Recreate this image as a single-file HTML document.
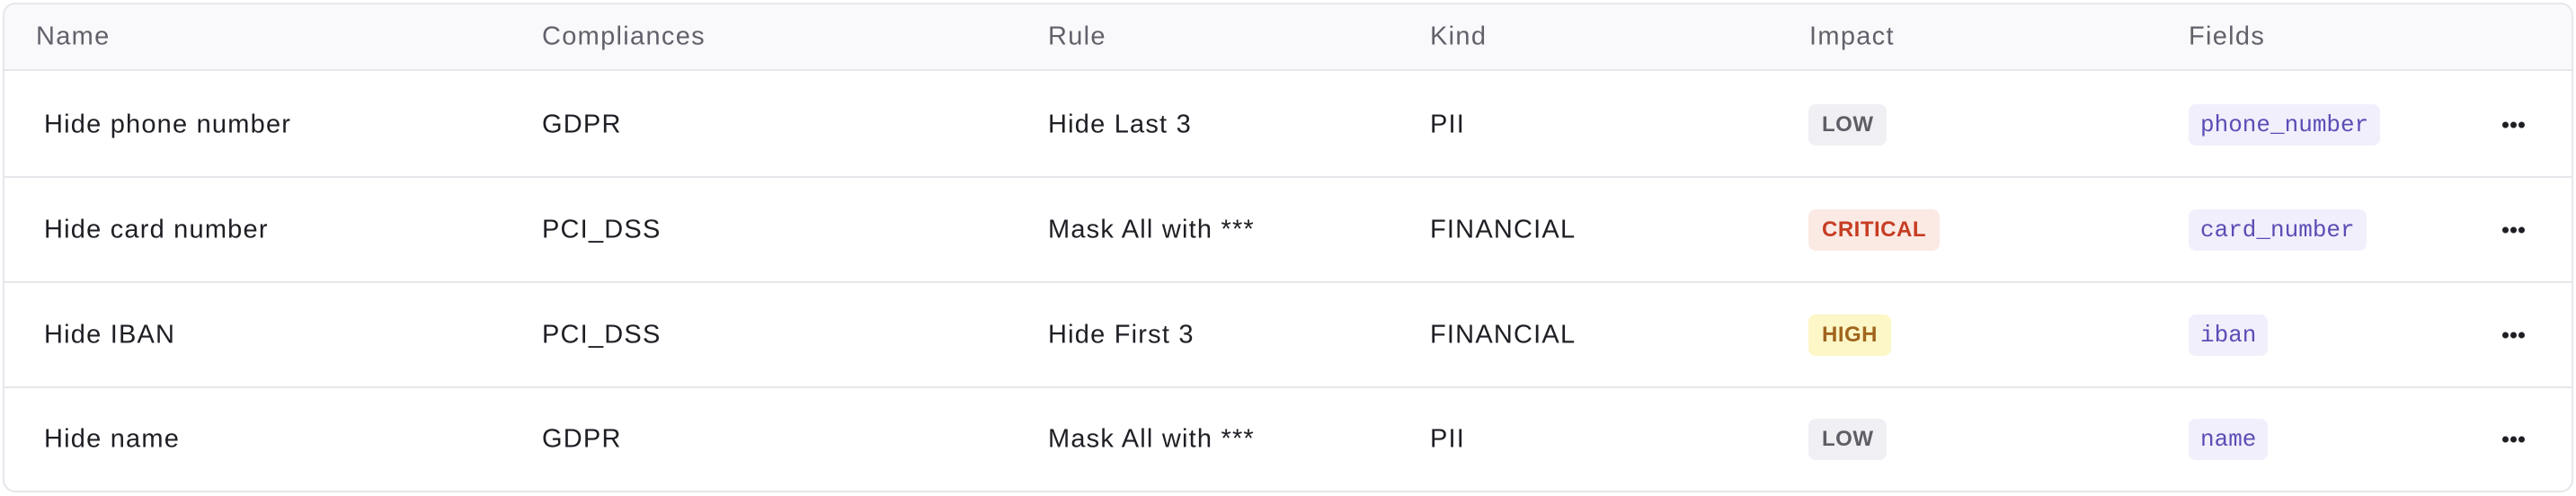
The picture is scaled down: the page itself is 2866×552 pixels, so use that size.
<!DOCTYPE html>
<html><head><meta charset="utf-8"><style>
*{box-sizing:border-box;margin:0;padding:0}
body{width:2866px;height:552px;background:#fff;position:relative;overflow:hidden;font-family:"Liberation Sans",sans-serif}
.tbl{position:absolute;left:3px;top:3px;width:2860px;height:545px;border:2px solid #e6e6eb;border-radius:14px;overflow:hidden}
.hdr{position:absolute;left:0;top:0;right:0;height:74px;background:#f9f9fb;border-bottom:2px solid #e6e6eb}
.row{position:absolute;left:0;right:0;height:117px;border-bottom:2px solid #e6e6eb}
.row.last{border-bottom:none}
.c{position:absolute;top:50%;transform:translateY(-50%);font-size:29px;letter-spacing:1.2px;color:#1e1e24;white-space:nowrap}
.hdr .c{color:#62616b;letter-spacing:1.3px}
.b{position:absolute;top:50%;transform:translateY(-50%);height:46px;line-height:46px;border-radius:8px;font-weight:bold;font-size:24px;padding:0 15px;letter-spacing:0.5px}
.low{background:#f0eff4;color:#5f5e66}
.crit{background:#fbe9e4;color:#c63d22}
.high{background:#fdf6c6;color:#a0651c}
.f{position:absolute;top:50%;transform:translateY(-50%);height:46px;line-height:46px;border-radius:8px;background:#f1effc;color:#5b4db5;font-family:"Liberation Mono",monospace;font-size:26px;padding:0 13px;left:2430px}
.dots{position:absolute;top:50%;transform:translateY(-50%);left:2779px;width:26px;height:7px}
.dots i{position:absolute;top:0;width:7px;height:7px;border-radius:50%;background:#1e1e24}
</style></head><body>
<div class="tbl">
 <div class="hdr">
  <div class="c" style="left:35px">Name</div>
  <div class="c" style="left:598px">Compliances</div>
  <div class="c" style="left:1161px">Rule</div>
  <div class="c" style="left:1586px">Kind</div>
  <div class="c" style="left:2008px">Impact</div>
  <div class="c" style="left:2430px">Fields</div>
 </div>
 <div class="row" style="top:76px">
  <div class="c" style="left:44px">Hide phone number</div>
  <div class="c" style="left:598px">GDPR</div>
  <div class="c" style="left:1161px">Hide Last 3</div>
  <div class="c" style="left:1586px">PII</div>
  <div class="b low" style="left:2007px">LOW</div>
  <div class="f">phone_number</div>
  <div class="dots"><i style="left:0"></i><i style="left:9px"></i><i style="left:18px"></i></div>
 </div>
 <div class="row" style="top:193px">
  <div class="c" style="left:44px">Hide card number</div>
  <div class="c" style="left:598px">PCI_DSS</div>
  <div class="c" style="left:1161px">Mask All with ***</div>
  <div class="c" style="left:1586px">FINANCIAL</div>
  <div class="b crit" style="left:2007px">CRITICAL</div>
  <div class="f">card_number</div>
  <div class="dots"><i style="left:0"></i><i style="left:9px"></i><i style="left:18px"></i></div>
 </div>
 <div class="row" style="top:310px">
  <div class="c" style="left:44px">Hide IBAN</div>
  <div class="c" style="left:598px">PCI_DSS</div>
  <div class="c" style="left:1161px">Hide First 3</div>
  <div class="c" style="left:1586px">FINANCIAL</div>
  <div class="b high" style="left:2007px">HIGH</div>
  <div class="f">iban</div>
  <div class="dots"><i style="left:0"></i><i style="left:9px"></i><i style="left:18px"></i></div>
 </div>
 <div class="row last" style="top:427px;height:114px">
  <div class="c" style="left:44px">Hide name</div>
  <div class="c" style="left:598px">GDPR</div>
  <div class="c" style="left:1161px">Mask All with ***</div>
  <div class="c" style="left:1586px">PII</div>
  <div class="b low" style="left:2007px">LOW</div>
  <div class="f">name</div>
  <div class="dots"><i style="left:0"></i><i style="left:9px"></i><i style="left:18px"></i></div>
 </div>
</div>
</body></html>
